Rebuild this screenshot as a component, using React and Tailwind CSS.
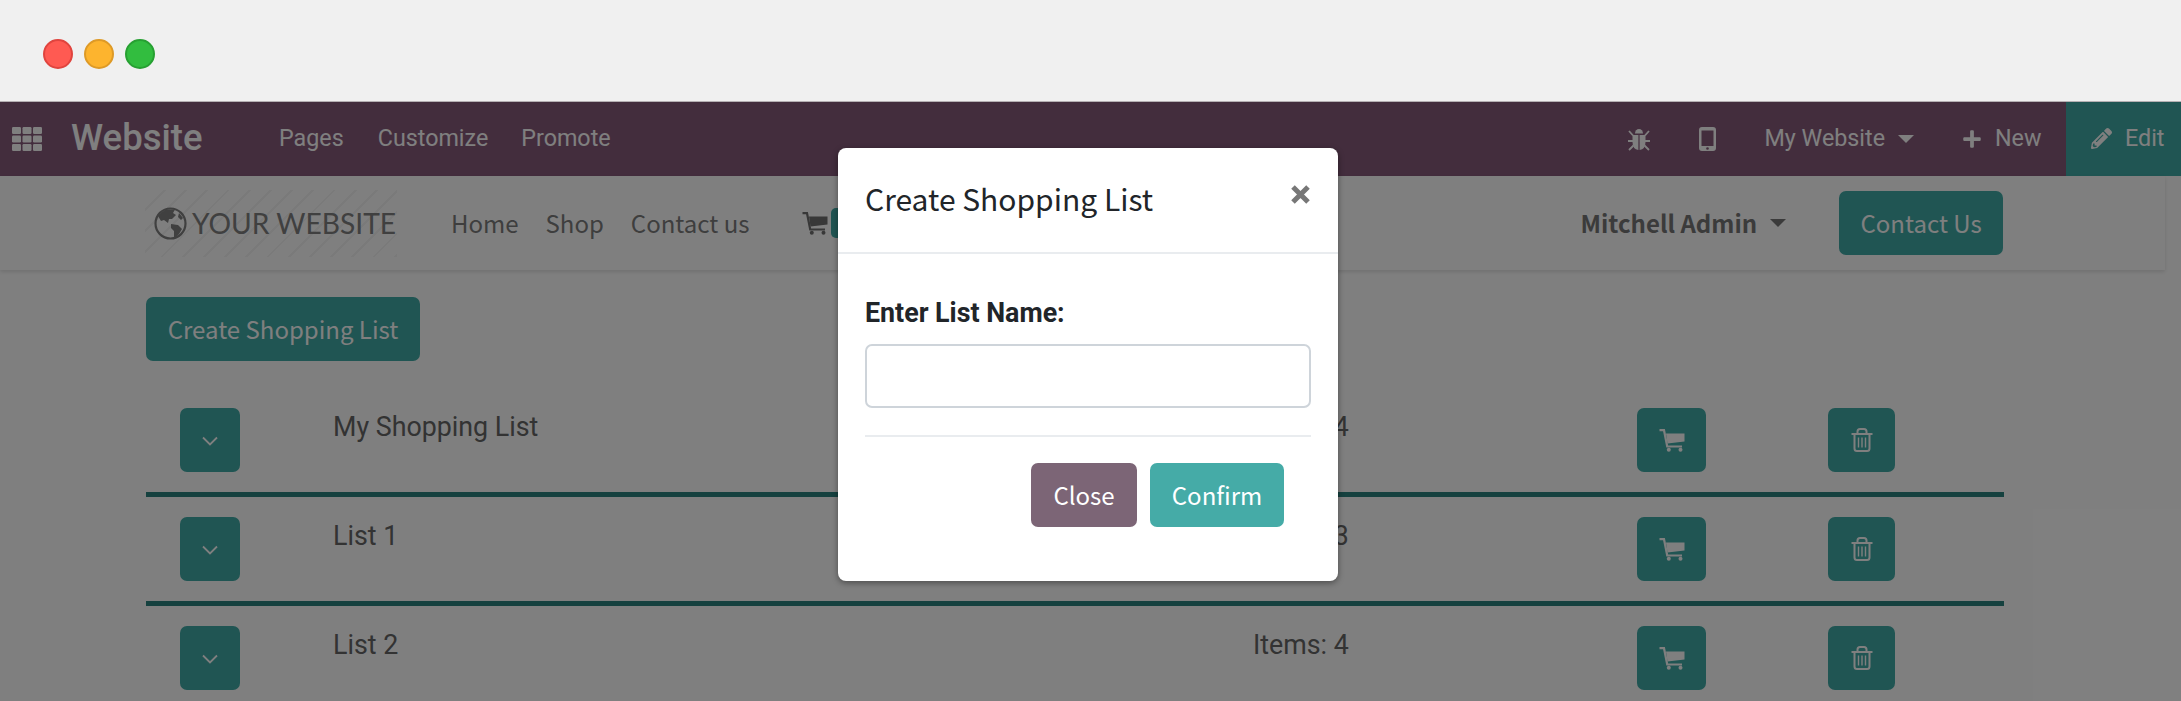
import React from "react";
import { FaPlus, FaPencilAlt } from "react-icons/fa";

const SRC = "font-['Noto_Sans_CJK_SC','Noto_Sans',sans-serif]";
const ROB = "font-['Roboto',sans-serif]";

function Caret({ className }) {
  return <span className={"inline-block w-0 h-0 border-x-[8px] border-x-transparent border-t-[8px] " + className} />;
}

function Chevron() {
  return (
    <svg width="16" height="10" viewBox="0 0 16 10" fill="none" stroke="currentColor" strokeWidth="1.8" className="mt-[1px]">
      <path d="M1 1.5 L8 8.5 L15 1.5" />
    </svg>
  );
}

function GridIcon() {
  const rects = [];
  for (let r = 0; r < 3; r++) {
    for (let c = 0; c < 3; c++) {
      rects.push(<rect key={r + "-" + c} x={c * 10.5} y={r * 8.5} width="9" height="7" rx="1.2" />);
    }
  }
  return <svg width="30" height="24" viewBox="0 0 30 24" fill="currentColor" className="ml-[12px]">{rects}</svg>;
}

function BugIcon() {
  return (
    <svg width="22" height="24" viewBox="0 0 22 24" fill="currentColor">
      <path d="M7 6.5 a4 4.5 0 0 1 8 0 z" />
      <path d="M4.5 8 H10.4 V23 Q4.5 22 4.5 15 Z" />
      <path d="M17.5 8 H11.6 V23 Q17.5 22 17.5 15 Z" />
      <path d="M1 4 L5 8.5 M21 4 L17 8.5 M0 14 H5 M22 14 H17 M1 23 L5.5 18.5 M21 23 L16.5 18.5" stroke="currentColor" strokeWidth="1.8" fill="none" />
    </svg>
  );
}

function PhoneIcon() {
  return (
    <svg width="17" height="24" viewBox="0 0 17 24" fill="currentColor">
      <path fillRule="evenodd" d="M3 0 H14 Q17 0 17 3 V21 Q17 24 14 24 H3 Q0 24 0 21 V3 Q0 0 3 0 Z M2.5 3.5 V19 H14.5 V3.5 Z" />
      <circle cx="8.5" cy="21.5" r="1.3" fill="#875a7b" />
    </svg>
  );
}

function CartIcon() {
  return (
    <svg width="26" height="23" viewBox="0 0 26 23" fill="currentColor">
      <path d="M7 4.5 H25.5 V12.5 L8.5 14.5 Z" />
      <path d="M0.5 1.2 H5 L8.2 17.5 H23" fill="none" stroke="currentColor" strokeWidth="2.2" />
      <circle cx="9.8" cy="20.8" r="2" />
      <circle cx="21.5" cy="20.8" r="2" />
    </svg>
  );
}

function TrashIcon() {
  return (
    <svg width="22" height="24" viewBox="0 0 22 24" fill="none" stroke="currentColor">
      <path d="M0.5 6 H21.5" strokeWidth="2" />
      <path d="M6.5 5.5 V3.5 Q6.5 1 9 1 H13 Q15.5 1 15.5 3.5 V5.5" strokeWidth="2" />
      <path d="M3.5 6 V20.5 Q3.5 23 6 23 H16 Q18.5 23 18.5 20.5 V6" strokeWidth="2" />
      <path d="M7.5 9.5 V19.5 M11 9.5 V19.5 M14.5 9.5 V19.5" strokeWidth="1.4" />
    </svg>
  );
}

function GlobeIcon() {
  return (
    <svg width="33" height="33" viewBox="0 0 33 33" className="ml-[9px] text-[#808080]">
      <circle cx="16.5" cy="16.5" r="15" fill="none" stroke="currentColor" strokeWidth="2.2" />
      <path fill="currentColor" d="M12 2.5 L21 2.5 L19 6 L22 8 L18 12 L15 12 L14 16 L10 13 L7 14 L4 9 L8 5 Z" />
      <path fill="currentColor" d="M17 17 L24 18 L28 22 L25 27 L22 30 L20 30 L20 24 L17 21 Z" />
      <path fill="currentColor" d="M25 6 L29 11 L27 13 L24 10 Z" />
    </svg>
  );
}

function TealButton({ className, children }) {
  return (
    <button className={"flex items-center justify-center rounded-[7px] bg-[#40aaa6] text-white " + className}>
      {children}
    </button>
  );
}

function Row({ name, items, last }) {
  return (
    <div className={last ? "" : "border-b-[5px] border-[#2a827e] pb-[20px] mb-[20px]"}>
      <div className="grid grid-cols-[187px_920px_384px_191px_1fr]">
        <div className="pl-[34px]">
          <TealButton className="w-[60px] h-[64px]"><Chevron /></TealButton>
        </div>
        <div className={ROB + " text-[26.8px] leading-[38px] text-[#666]"}>{name}</div>
        <div className={ROB + " text-[26.8px] leading-[38px] text-[#666]"}>Items: {items}</div>
        <TealButton className="w-[69px] h-[64px]"><CartIcon /></TealButton>
        <TealButton className="w-[67px] h-[64px]"><TrashIcon /></TealButton>
      </div>
    </div>
  );
}

export default function App() {
  return (
    <div className="w-[2181px] h-[701px] overflow-hidden bg-white">
      {/* window chrome */}
      <div className="h-[102px] bg-[#f0f0f0] border-b border-[#b5b0b3] flex items-center pl-[43px] pt-[6px] gap-[11px]">
        <span className="w-[30px] h-[30px] rounded-full bg-[#ff5a52] border-2 border-[#e0443e]" />
        <span className="w-[30px] h-[30px] rounded-full bg-[#fdb42e] border-2 border-[#de9a26]" />
        <span className="w-[30px] h-[30px] rounded-full bg-[#32bd3f] border-2 border-[#27a032]" />
      </div>

      <div className="relative h-[599px] overflow-hidden">
        {/* Odoo top bar */}
        <div className={ROB + " h-[74px] bg-[#875a7b] text-white flex items-center"}>
          <div className="flex items-center h-full pb-[1px] text-[23.3px]">
            <GridIcon />
            <span className="ml-[29px] mb-[1px] text-[36.5px] font-medium leading-none w-[208px]">Website</span>
            <span>Pages</span>
            <span className="ml-[34px]">Customize</span>
            <span className="ml-[33px]">Promote</span>
          </div>
          <div className="ml-auto flex items-center h-full text-[23.3px]">
            <div className="flex items-center h-full pb-[1px]">
              <BugIcon />
              <span className="ml-[49px]"><PhoneIcon /></span>
              <span className="ml-[48px]">My Website</span>
              <Caret className="ml-[13px] border-t-white" />
              <FaPlus className="ml-[48px] text-[20px]" />
              <span className="ml-[13px] w-[71px]">New</span>
            </div>
            <div className="h-full w-[115px] bg-[#40aaa6] flex items-center pl-[25px] pb-[1px]">
              <FaPencilAlt className="text-[21px]" />
              <span className="ml-[13px]">Edit</span>
            </div>
          </div>
        </div>

        {/* site nav */}
        <div className={SRC + " relative h-[94px] w-[2165px] bg-white shadow-[0_2px_4px_rgba(0,0,0,0.12)] flex items-center text-[24px] text-[#7d7d7d]"}>
          <div className="ml-[145px] h-[67px] w-[252px] flex items-center shrink-0 bg-[repeating-linear-gradient(135deg,transparent,transparent_13px,#f4f4f4_13px,#f4f4f4_15px)]">
            <GlobeIcon />
            <span className="ml-[5px] font-['Lato',sans-serif] text-[28.2px] text-[#808080] leading-none whitespace-nowrap">YOUR WEBSITE</span>
          </div>
          <span className="ml-[54px]">Home</span>
          <span className="ml-[27px]">Shop</span>
          <span className="ml-[27px]">Contact us</span>
          <span className="ml-[52px] text-[#707070]"><CartIcon /></span>
          <span className="ml-[3px] w-[40px] h-[30px] rounded-[5px] bg-[#40aaa6]" />
          <span className="ml-[710px] font-bold text-[#777] whitespace-nowrap">Mitchell Admin</span>
          <Caret className="ml-[13px] border-t-[#777]" />
          <TealButton className="ml-[53px] w-[164px] h-[64px]">Contact Us</TealButton>
        </div>

        {/* page content */}
        <div className="w-[2004px] pl-[146px] pt-[27px]">
          <TealButton className={SRC + " w-[274px] h-[64px] text-[24px] pb-[1px]"}>Create Shopping List</TealButton>
          <div className="mt-[47px]">
            <Row name="My Shopping List" items={4} />
            <Row name="List 1" items={3} />
            <Row name="List 2" items={4} last />
          </div>
        </div>

        {/* backdrop */}
        <div className="absolute inset-0 bg-black/50" />

        {/* modal */}
        <div className="absolute left-[838px] top-[46px] w-[500px] h-[433px] bg-white rounded-[8px] shadow-[0_2px_6px_rgba(0,0,0,0.4)]">
          <div className="h-[106px] border-b-2 border-[#e9ecef] flex justify-between pl-[27px] pr-[28px]">
            <span className={SRC + " text-[30px] leading-[101px] text-[#212529]"}>Create Shopping List</span>
            <span className="mt-[37px]">
              <svg width="19" height="19" viewBox="0 0 19 19" stroke="#777" strokeWidth="5"><path d="M2 2 L17 17 M17 2 L2 17" /></svg>
            </span>
          </div>
          <div className="px-[27px]">
            <div className={ROB + " mt-[43px] text-[26.8px] leading-[32px] font-bold text-[#212529]"}>Enter List Name:</div>
            <input className="block mt-[15px] w-full h-[64px] border-2 border-[#ced4da] rounded-[7px] bg-white" />
            <div className="mt-[27px] h-[2px] bg-[#e9ecef]" />
            <div className={SRC + " mt-[26px] flex gap-[13px] pl-[166px] text-[24px] text-white"}>
              <button className="w-[106px] h-[64px] rounded-[7px] bg-[#7c6576]">Close</button>
              <button className="w-[134px] h-[64px] rounded-[7px] bg-[#45aba7]">Confirm</button>
            </div>
          </div>
        </div>
      </div>
    </div>
  );
}
